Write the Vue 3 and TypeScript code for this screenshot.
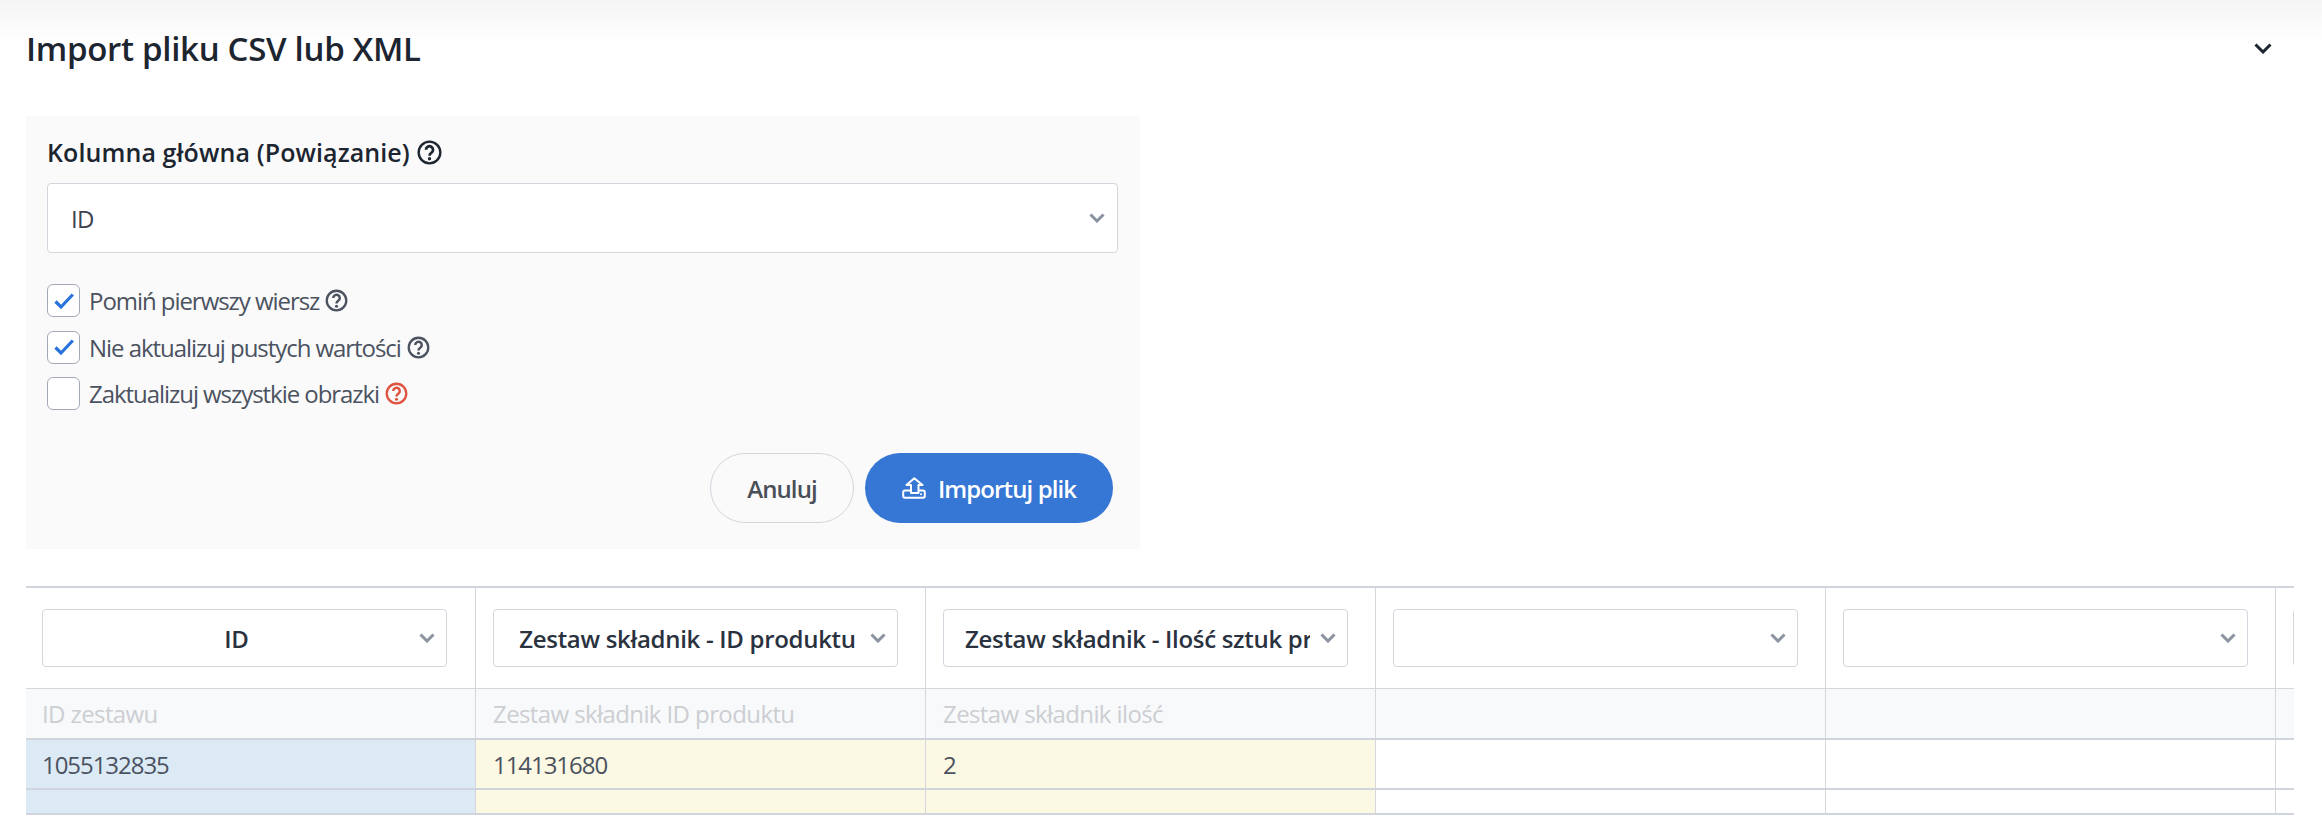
<template>
  <div class="page">
    <div class="head">
      <h2 class="title">Import pliku CSV lub XML</h2>
      <svg class="collapse" viewBox="0 0 18 11" width="18" height="11">
        <path d="M1.5 1.5 9 9l7.5-7.5" fill="none" stroke="#1c2530" stroke-width="3" />
      </svg>
    </div>

    <div class="panel">
      <div class="label">
        Kolumna główna (Powiązanie)
        <svg class="help dark" viewBox="0 0 24 24" width="25" height="25">
          <circle cx="12" cy="12" r="10.4" fill="none" stroke="currentColor" stroke-width="2.3" />
          <path d="M8.6 9.4a3.4 3.4 0 1 1 5.2 2.9c-1.2.8-1.8 1.4-1.8 2.7" fill="none" stroke="currentColor" stroke-width="2.6" />
          <circle cx="12" cy="18" r="1.6" fill="currentColor" />
        </svg>
      </div>
      <div class="select main-select">
        <span>ID</span>
        <svg class="arrow" viewBox="0 0 16 10" width="16" height="10">
          <path d="M1.5 1.5 8 8l6.5-6.5" fill="none" stroke="#8b93a0" stroke-width="3" />
        </svg>
      </div>

      <div class="checks">
        <div v-for="c in checks" :key="c.text" class="check">
          <span class="box">
            <svg v-if="c.on" viewBox="0 0 20 18" width="20" height="18">
              <path d="M1.5 9.5 7 15 18.8 2.5" fill="none" stroke="#2a73dc" stroke-width="3.2" />
            </svg>
          </span>
          <span class="check-text">{{ c.text }}</span>
          <svg class="help" :class="{ red: c.warn }" viewBox="0 0 24 24" width="23" height="23">
            <circle cx="12" cy="12" r="10.2" fill="none" stroke="currentColor" stroke-width="2.4" />
            <path d="M8.6 9.4a3.4 3.4 0 1 1 5.2 2.9c-1.2.8-1.8 1.4-1.8 2.7" fill="none" stroke="currentColor" stroke-width="2.6" />
            <circle cx="12" cy="18" r="1.6" fill="currentColor" />
          </svg>
        </div>
      </div>

      <div class="actions">
        <button class="btn cancel">Anuluj</button>
        <button class="btn primary">
          <svg viewBox="0 0 24 22" width="24" height="22">
            <path d="M12.3 1.2 20.5 8H16.5V16H9V8H4.5Z" fill="none" stroke="#fff" stroke-width="2" stroke-linejoin="round" />
            <path d="M9 13.5H3Q1.2 13.5 1.2 15.3V19Q1.2 20.8 3 20.8H21Q22.8 20.8 22.8 19V15.3Q22.8 13.5 21 13.5H16.5" fill="none" stroke="#fff" stroke-width="2" />
            <circle cx="19" cy="17.3" r="1" fill="#fff" />
          </svg>
          Importuj plik
        </button>
      </div>
    </div>

    <div class="table">
      <div class="row row-head">
        <div v-for="(h, i) in headers" :key="i" class="cell">
          <div class="select head-select">
            <span class="head-text">{{ h }}</span>
            <svg class="arrow" viewBox="0 0 16 10" width="16" height="10">
              <path d="M1.5 1.5 8 8l6.5-6.5" fill="none" stroke="#8b93a0" stroke-width="3" />
            </svg>
          </div>
        </div>
      </div>
      <div class="row row-names">
        <div v-for="(n, i) in names" :key="i" class="cell">{{ n }}</div>
      </div>
      <div class="row row-data">
        <div v-for="(v, i) in values" :key="i" class="cell" :class="tint(i)">{{ v }}</div>
      </div>
      <div class="row row-empty">
        <div v-for="(v, i) in values" :key="i" class="cell" :class="tint(i)"></div>
      </div>
    </div>
  </div>
</template>

<script setup lang="ts">
const checks = [
  { text: 'Pomiń pierwszy wiersz', on: true, warn: false },
  { text: 'Nie aktualizuj pustych wartości', on: true, warn: false },
  { text: 'Zaktualizuj wszystkie obrazki', on: false, warn: true },
]

const headers = ['ID', 'Zestaw składnik - ID produktu', 'Zestaw składnik - Ilość sztuk produktu', '', '', '']
const names = ['ID zestawu', 'Zestaw składnik ID produktu', 'Zestaw składnik ilość', '', '', '']
const values = ['1055132835', '114131680', '2', '', '', '']

function tint(i: number) {
  if (i === 0) return 'blue'
  if (i < 3) return 'yellow'
  return ''
}
</script>

<style>
body {
  background: #fff;
}
</style>

<style scoped>
.page {
  width: 2322px;
  height: 834px;
  box-sizing: border-box;
  padding: 0 28px 0 26px;
  overflow: hidden;
  font-family: "Open Sans", sans-serif;
  background: linear-gradient(#f5f5f5 0, #fff 44px) no-repeat;
}

.head {
  display: flex;
  align-items: center;
  justify-content: space-between;
  height: 96px;
  margin-bottom: 20px;
}

.title {
  margin: 0;
  font-size: 33px;
  font-weight: 600;
  letter-spacing: -0.3px;
  color: #1c2530;
}

.collapse {
  margin-right: 22px;
}

.panel {
  width: 1114px;
  height: 433px;
  box-sizing: border-box;
  padding: 20px 22px 0 21px;
  background: #fafafa;
  margin-bottom: 37px;
}

.label {
  display: flex;
  align-items: center;
  gap: 7px;
  height: 32px;
  margin-bottom: 15px;
  font-size: 25px;
  font-weight: 600;
  letter-spacing: 0.1px;
  color: #1c2530;
}

.select {
  display: flex;
  align-items: center;
  background: #fff;
  border: 1px solid #d3d6dd;
  border-radius: 4px;
  box-sizing: border-box;
}

.main-select {
  height: 70px;
  padding: 0 12px 0 23px;
  justify-content: space-between;
  font-size: 24px;
  letter-spacing: -0.8px;
  color: #3d4450;
  margin-bottom: 31px;
}

.checks {
  display: flex;
  flex-direction: column;
  gap: 13.5px;
}

.check {
  display: flex;
  align-items: center;
  height: 33px;
  font-size: 24px;
  letter-spacing: -1.05px;
  color: #4b5260;
}

.box {
  display: flex;
  align-items: center;
  justify-content: center;
  width: 33px;
  height: 33px;
  box-sizing: border-box;
  margin-right: 9px;
  background: #fff;
  border: 1px solid #a3a9b6;
  border-radius: 6px;
}

.check-text {
  margin-right: 6px;
}

.help {
  color: #4b5260;
  flex: none;
}

.help.dark {
  color: #1c2530;
}

.help.red {
  color: #e0533f;
}

.actions {
  display: flex;
  justify-content: flex-end;
  gap: 11px;
  margin-top: 43px;
  padding-right: 5px;
}

.btn {
  display: flex;
  align-items: center;
  justify-content: center;
  height: 70px;
  box-sizing: border-box;
  border-radius: 35px;
  font-family: inherit;
  font-size: 24px;
  letter-spacing: -0.9px;
  font-weight: 600;
}

.cancel {
  width: 144px;
  background: transparent;
  border: 1px solid #d3d6dd;
  color: #4a4f57;
}

.primary {
  width: 248px;
  gap: 12px;
  background: #3676d4;
  border: 0;
  color: #fff;
}

.table {
  border-top: 2px solid #d0d4dc;
  overflow: hidden;
}

.row {
  display: grid;
  grid-template-columns: repeat(6, 450px);
}

.cell {
  box-sizing: border-box;
  border-right: 1px solid #d5d7dc;
  padding: 0 27px 0 17px;
  display: flex;
  align-items: center;
  font-size: 24px;
  letter-spacing: -0.6px;
}

.cell:first-child {
  padding-left: 16px;
}

.row-head .cell {
  height: 101px;
  border-bottom: 1px solid #d5d7dc;
}

.row-names .cell {
  height: 51px;
  background: #f8f9fb;
  color: #ccced2;
  border-bottom: 2px solid #d0d4dc;
}

.row-data .cell {
  height: 50px;
  color: #4b5260;
  letter-spacing: -1.05px;
  border-bottom: 2px solid #d0d4dc;
}

.row-empty .cell {
  height: 25px;
  border-bottom: 2px solid #d0d4dc;
}

.blue {
  background: #dceaf6;
}

.yellow {
  background: #fbf8e3;
}

.head-select {
  width: 405px;
  height: 58px;
  flex: none;
  padding: 0 12px 0 21px;
  gap: 10px;
}

.head-text {
  flex: none;
  width: 345px;
  overflow: hidden;
  white-space: nowrap;
  text-align: center;
  font-size: 24px;
  font-weight: 600;
  letter-spacing: -0.3px;
  color: #2a3240;
}

.arrow {
  flex: none;
}
</style>
